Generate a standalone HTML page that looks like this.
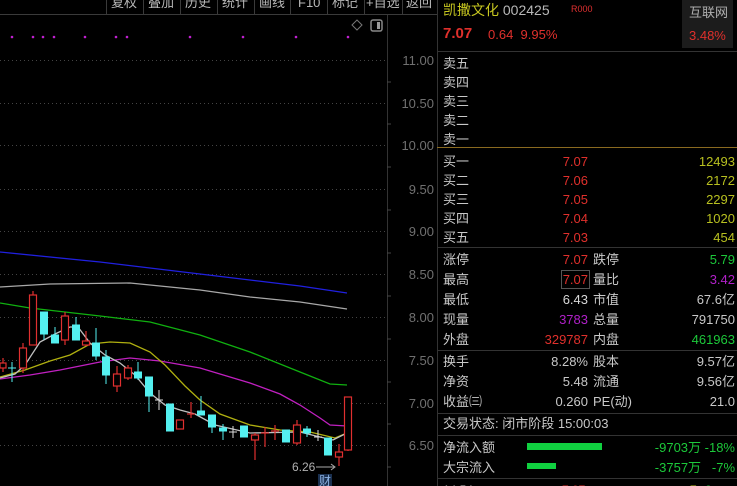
<!DOCTYPE html>
<html><head><meta charset="utf-8"><style>
html,body{margin:0;width:737px;height:486px;background:#000;overflow:hidden}
body{position:relative;font-family:"Liberation Sans","Noto Sans CJK SC",sans-serif;color:#c8c8c8}
.a{position:absolute;white-space:nowrap;font-size:13px;line-height:16px}
.r{text-align:right}
.red{color:#e0302c}.g{color:#1cc83a}.y{color:#b8c020}.m{color:#b020c8}.w{color:#d8d8d8}
.hl{position:absolute;left:437px;width:300px;height:1px;background:#333}
</style></head><body>
<svg width="437" height="486" style="position:absolute;left:0;top:0">
<g stroke="#3a3a3a" stroke-width="1"><line x1="106.5" y1="0" x2="106.5" y2="14"/><line x1="143.5" y1="0" x2="143.5" y2="14"/><line x1="180.5" y1="0" x2="180.5" y2="14"/><line x1="217.5" y1="0" x2="217.5" y2="14"/><line x1="254.5" y1="0" x2="254.5" y2="14"/><line x1="290.5" y1="0" x2="290.5" y2="14"/><line x1="327.5" y1="0" x2="327.5" y2="14"/><line x1="364.5" y1="0" x2="364.5" y2="14"/><line x1="402.5" y1="0" x2="402.5" y2="14"/><line x1="0" y1="14.5" x2="437" y2="14.5"/></g>
<g font-size="13" fill="#b8b8b8" font-family="Liberation Sans,Noto Sans CJK SC,sans-serif"><text x="111" y="7">复权</text><text x="148" y="7">叠加</text><text x="185" y="7">历史</text><text x="222" y="7">统计</text><text x="259" y="7">画线</text><text x="298" y="7">F10</text><text x="332" y="7">标记</text><text x="366" y="7">+自选</text><text x="406" y="7">返回</text></g>
<line x1="387.5" y1="15" x2="387.5" y2="486" stroke="#333"/>
<g stroke="#444" stroke-dasharray="1 3"><line x1="0" y1="60.5" x2="385" y2="60.5"/><line x1="0" y1="103.5" x2="385" y2="103.5"/><line x1="0" y1="145.5" x2="385" y2="145.5"/><line x1="0" y1="189.5" x2="385" y2="189.5"/><line x1="0" y1="231.5" x2="385" y2="231.5"/><line x1="0" y1="274.5" x2="385" y2="274.5"/><line x1="0" y1="317.5" x2="385" y2="317.5"/><line x1="0" y1="360.5" x2="385" y2="360.5"/><line x1="0" y1="403.5" x2="385" y2="403.5"/><line x1="0" y1="445.5" x2="385" y2="445.5"/></g>
<g stroke="#444"><line x1="387" y1="82" x2="391" y2="82"/><line x1="387" y1="124" x2="391" y2="124"/><line x1="387" y1="167" x2="391" y2="167"/><line x1="387" y1="210" x2="391" y2="210"/><line x1="387" y1="253" x2="391" y2="253"/><line x1="387" y1="296" x2="391" y2="296"/><line x1="387" y1="339" x2="391" y2="339"/><line x1="387" y1="382" x2="391" y2="382"/><line x1="387" y1="424" x2="391" y2="424"/><line x1="387" y1="467" x2="391" y2="467"/></g>
<g font-size="13" fill="#707070" text-anchor="end" font-family="Liberation Sans,sans-serif"><text x="434" y="65">11.00</text><text x="434" y="108">10.50</text><text x="434" y="150">10.00</text><text x="434" y="194">9.50</text><text x="434" y="236">9.00</text><text x="434" y="279">8.50</text><text x="434" y="322">8.00</text><text x="434" y="365">7.50</text><text x="434" y="408">7.00</text><text x="434" y="450">6.50</text></g>
<g fill="#c020d0"><circle cx="12" cy="37" r="1.3"/><circle cx="33" cy="37" r="1.3"/><circle cx="43" cy="37" r="1.3"/><circle cx="54" cy="37" r="1.3"/><circle cx="85" cy="37" r="1.3"/><circle cx="116" cy="37" r="1.3"/><circle cx="127" cy="37" r="1.3"/><circle cx="190" cy="37" r="1.3"/><circle cx="243" cy="37" r="1.3"/><circle cx="296" cy="37" r="1.3"/><circle cx="348" cy="37" r="1.3"/></g>
<path d="M357 20 L362 25 L357 30 L352 25Z" fill="none" stroke="#777"/>
<rect x="371" y="20" width="11" height="11" rx="2" fill="none" stroke="#888" stroke-width="1.5"/><rect x="377" y="22" width="3" height="7" fill="#999"/>
<g fill="none" stroke-width="1.3">
<polyline stroke="#2020e0" points="0,252 100,262 200,274 300,286 347,293"/>
<polyline stroke="#a8a8a8" points="0,287 50,284 130,283 200,290 250,297 300,302 347,309"/>
<polyline stroke="#10b010" points="0,303 30,308 100,316 150,322 200,335 250,352 300,372 330,384 347,385"/>
<polyline stroke="#c020c0" points="0,379 30,375 60,370 100,362 130,358 160,361 200,368 250,383 280,394 300,405 320,418 330,425 347,426"/>
<polyline stroke="#b0b010" points="0,377 25,370 50,361 70,355 90,344 110,342 130,343 150,352 165,365 185,386 200,400 220,414 250,425 280,430 310,432 335,438 347,433"/>
<polyline stroke="#c0c0c0" points="0,378 15,374 25,365 40,342 55,334 70,327 78,327 90,343 105,355 120,363 135,375 150,393 165,405 180,410 195,414 215,425 250,433 300,432 320,437 333,440 347,433"/>
</g>
<g stroke="#e03030" fill="none" stroke-width="1.2">
<line x1="3" y1="358" x2="3" y2="372"/><rect x="0" y="363" width="6" height="5" fill="#000"/>
<line x1="23" y1="343" x2="23" y2="373"/><rect x="19.5" y="348" width="7" height="20" fill="#000"/>
<line x1="33" y1="291" x2="33" y2="345"/><rect x="29.5" y="295" width="7" height="50" fill="#000"/>
<line x1="65" y1="312" x2="65" y2="345"/><rect x="61.5" y="316" width="7" height="24" fill="#000"/>
<line x1="86" y1="331" x2="86" y2="346"/><rect x="82.5" y="341" width="7" height="4" fill="#000"/>
<line x1="117" y1="366" x2="117" y2="392"/><rect x="113.5" y="374" width="7" height="12" fill="#000"/>
<line x1="128" y1="365" x2="128" y2="380"/><rect x="124.5" y="368" width="7" height="10" fill="#000"/>
<rect x="176.5" y="420" width="7" height="9" fill="#000"/>
<line x1="191" y1="402" x2="191" y2="418"/><line x1="187" y1="414" x2="195" y2="414"/>
<line x1="255" y1="433" x2="255" y2="460"/><rect x="251.5" y="435" width="7" height="5" fill="#000"/>
<line x1="265" y1="427" x2="265" y2="447"/><line x1="261" y1="433" x2="269" y2="433"/>
<line x1="275" y1="425" x2="275" y2="440"/><line x1="271" y1="431" x2="279" y2="431"/>
<line x1="297" y1="420" x2="297" y2="445"/><rect x="293.5" y="425" width="7" height="18" fill="#000"/>
<line x1="339" y1="444" x2="339" y2="466"/><rect x="335.5" y="452" width="7" height="5" fill="#000"/>
<line x1="348" y1="397" x2="348" y2="451"/><rect x="344.5" y="397" width="7" height="53" fill="#000"/>
</g>
<g fill="#54f0f0" stroke="#54f0f0" stroke-width="1">
<line x1="12" y1="362" x2="12" y2="382"/><line x1="8" y1="368" x2="16" y2="368"/>
<rect x="40.5" y="312" width="7" height="22"/><line x1="44" y1="334" x2="44" y2="340"/>
<rect x="51.5" y="335" width="7" height="8"/><line x1="55" y1="327" x2="55" y2="335"/>
<rect x="72.5" y="325" width="7" height="15"/><line x1="76" y1="317" x2="76" y2="325"/>
<rect x="92.5" y="343" width="7" height="13"/><line x1="96" y1="328" x2="96" y2="360"/>
<rect x="102.5" y="357" width="7" height="18"/><line x1="106" y1="350" x2="106" y2="384"/>
<rect x="134.5" y="372" width="7" height="6"/><line x1="138" y1="362" x2="138" y2="380"/>
<rect x="145.5" y="377" width="7" height="19"/><line x1="149" y1="396" x2="149" y2="412"/>
<rect x="166.5" y="404" width="7" height="27"/>
<rect x="197.5" y="411" width="7" height="4"/><line x1="201" y1="396" x2="201" y2="415"/>
<rect x="208.5" y="415" width="7" height="12"/><line x1="212" y1="427" x2="212" y2="433"/>
<rect x="219.5" y="428" width="7" height="3"/><line x1="223" y1="424" x2="223" y2="440"/>
<rect x="240.5" y="426" width="7" height="11"/>
<rect x="282.5" y="430" width="7" height="12"/>
<rect x="303.5" y="429" width="7" height="4"/><line x1="307" y1="426" x2="307" y2="437"/>
<rect x="324.5" y="438" width="7" height="17"/>
</g>
<g stroke="#ddd"><line x1="159" y1="390" x2="159" y2="410"/><line x1="155" y1="400" x2="163" y2="400"/><line x1="233" y1="426" x2="233" y2="438"/><line x1="229" y1="432" x2="237" y2="432"/><line x1="318" y1="430" x2="318" y2="441"/><line x1="314" y1="437" x2="322" y2="437"/></g>
<text x="292" y="471" font-size="12" fill="#b0b0b0" font-family="Liberation Sans,sans-serif">6.26</text>
<line x1="316" y1="467" x2="334" y2="467" stroke="#aaa"/><path d="M331 464 L335 467 L331 470" fill="none" stroke="#aaa"/>
<rect x="318" y="474" width="14" height="12" fill="#1a3050"/><text x="319" y="485" font-size="12" fill="#8ab0e0" font-family="Noto Sans CJK SC,sans-serif">财</text>
</svg>
<div style="position:absolute;left:437px;top:0;width:1px;height:486px;background:#333"></div>
<div class="a" style="left:443px;top:2px;font-size:14px;color:#c8c820">凯撒文化 <span style="color:#b8b8b8">002425</span></div>
<div class="a" style="left:571px;top:1px;font-size:9px;color:#e03030">R000</div>
<div class="a red" style="left:443px;top:26px;font-size:15px;font-weight:bold">7.07</div>
<div class="a red" style="left:488px;top:27px">0.64&nbsp; 9.95%</div>
<div style="position:absolute;left:682px;top:0;width:51px;height:48px;background:#1c1c1c"></div>
<div class="a" style="left:689px;top:5px;color:#b0b0b0">互联网</div>
<div class="a red" style="left:689px;top:28px">3.48%</div>
<div class="hl" style="top:51px"></div>
<div class="a" style="left:443px;top:54px;line-height:19px">卖五<br>卖四<br>卖三<br>卖二<br>卖一</div>
<div class="hl" style="top:147px;background:#8a6a20"></div>
<div class="a" style="left:443px;top:152px;line-height:19px">买一<br>买二<br>买三<br>买四<br>买五</div>
<div class="a red r" style="left:540px;top:152px;width:48px;line-height:19px">7.07<br>7.06<br>7.05<br>7.04<br>7.03</div>
<div class="a y r" style="left:660px;top:152px;width:75px;line-height:19px">12493<br>2172<br>2297<br>1020<br>454</div>
<div class="hl" style="top:247px"></div>
<div class="a" style="left:443px;top:250px;line-height:20px">涨停<br>最高<br>最低<br>现量<br>外盘</div>
<div class="a r" style="left:500px;top:250px;width:88px;line-height:20px"><span class="red">7.07</span><br><span class="red" style="outline:1px solid #555;outline-offset:1px">7.07</span><br><span class="w">6.43</span><br><span class="m">3783</span><br><span class="red">329787</span></div>
<div class="a" style="left:593px;top:250px;line-height:20px">跌停<br>量比<br>市值<br>总量<br>内盘</div>
<div class="a r" style="left:640px;top:250px;width:95px;line-height:20px"><span class="g">5.79</span><br><span class="m">3.42</span><br>67.6亿<br>791750<br><span class="g">461963</span></div>
<div class="hl" style="top:350px"></div>
<div class="a" style="left:443px;top:352px;line-height:20px">换手<br>净资<br>收益㈢</div>
<div class="a r" style="left:500px;top:352px;width:88px;line-height:20px">8.28%<br>5.48<br>0.260</div>
<div class="a" style="left:593px;top:352px;line-height:20px">股本<br>流通<br>PE(动)</div>
<div class="a r" style="left:640px;top:352px;width:95px;line-height:20px">9.57亿<br>9.56亿<br>21.0</div>
<div class="hl" style="top:413px"></div>
<div class="a" style="left:443px;top:416px">交易状态: 闭市阶段 15:00:03</div>
<div class="hl" style="top:435px"></div>
<div class="a" style="left:443px;top:438px;line-height:20px">净流入额<br>大宗流入</div>
<div style="position:absolute;left:527px;top:443px;width:75px;height:7px;background:#10d040"></div>
<div style="position:absolute;left:527px;top:463px;width:29px;height:6px;background:#10d040"></div>
<div class="a g r" style="left:600px;top:438px;width:135px;line-height:20px">-9703万 -18%<br>-3757万&nbsp;&nbsp; -7%</div>
<div class="hl" style="top:478px"></div>
<div class="a" style="left:443px;top:482px;font-size:12px">14:54</div><div class="a red" style="left:562px;top:482px;font-size:12px">7.07</div><div class="a y" style="left:690px;top:482px;font-size:12px">7</div><div class="a g" style="left:705px;top:482px;font-size:12px">2</div>
</body></html>
